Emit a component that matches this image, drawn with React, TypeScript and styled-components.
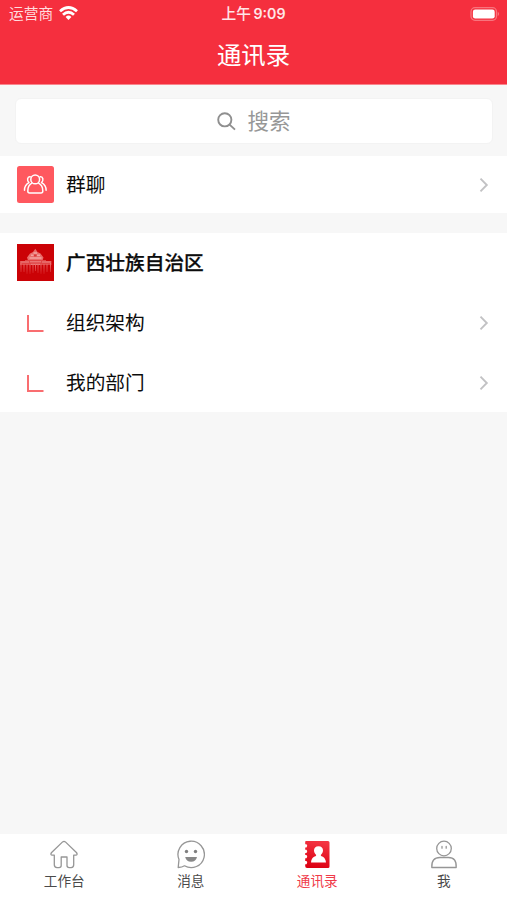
import React from "react";
import styled, { createGlobalStyle } from "styled-components";

const GlobalStyle = createGlobalStyle`
  * { box-sizing: border-box; }
  body {
    margin: 0;
    background: #f7f7f7;
    font-family: "Liberation Sans", "Noto Sans CJK SC", sans-serif;
  }
  svg { display: block; flex: none; }
`;

const Screen = styled.div`
  height: 900px;
  display: flex;
  flex-direction: column;
  overflow: hidden;
  background: #f7f7f7;
`;

const Header = styled.header`
  height: 85px;
  flex: none;
  background: #f52f3e;
  border-bottom: 1px solid #f9858d;
  color: #fff;
`;

const StatusBar = styled.div`
  height: 27px;
  padding: 0 7px 0 9px;
  display: grid;
  grid-template-columns: 1fr auto 1fr;
  align-items: center;
`;

const Carrier = styled.div`
  display: flex;
  align-items: center;
  gap: 6px;
  font-size: 14.7px;
  line-height: 20px;
  color: #ffdcde;
`;

const Clock = styled.div`
  font-family: Inter, "Noto Sans CJK SC", sans-serif;
  font-size: 14.2px;
  line-height: 20px;
  font-weight: 600;
  color: #ffe6e8;
  white-space: pre;
  margin-right: 2px;
`;

const Meridiem = styled.span`
  font-weight: 500;
  font-size: 14.7px;
  margin-right: -1px;
`;

const BatterySlot = styled.div`
  display: flex;
  justify-content: flex-end;
`;

const Title = styled.h1`
  margin: 0;
  height: 57px;
  line-height: 58px;
  text-align: center;
  font-size: 24.4px;
  font-weight: 400;
`;

const SearchBox = styled.div`
  flex: none;
  height: 46px;
  margin: 13px 14px 12px 15px;
  border-radius: 6px;
  border: 1px solid #f3f3f3;
  background: #fff;
  display: flex;
  align-items: center;
  justify-content: center;
  gap: 11px;
  font-size: 21.5px;
  line-height: 30px;
  color: #979797;
`;

const SearchText = styled.span`
  padding-top: 2px;
`;

const Group = styled.section<{ $gap?: number }>`
  flex: none;
  background: #fff;
  margin-bottom: ${(p) => p.$gap ?? 0}px;
`;

const Row = styled.div<{ $height: number; $bold?: boolean }>`
  height: ${(p) => p.$height}px;
  padding: 0 18px 0 17px;
  display: flex;
  align-items: center;
  font-size: 19.7px;
  line-height: 28px;
  font-weight: ${(p) => (p.$bold ? 500 : 400)};
  -webkit-text-stroke: ${(p) => (p.$bold ? "0.25px #0c0c0c" : "0")};
  color: #0c0c0c;
`;

const IconSlot = styled.div`
  width: 37px;
  margin-right: 12px;
  display: flex;
  justify-content: center;
`;

const Label = styled.span`
  flex: 1;
`;

const TabBar = styled.nav`
  flex: none;
  height: 66px;
  margin-top: auto;
  padding-left: 1px;
  background: #fff;
  display: grid;
  grid-template-columns: repeat(4, 1fr);
`;

const Tab = styled.div<{ $active?: boolean }>`
  display: flex;
  flex-direction: column;
  align-items: center;
  padding-top: 6px;
  gap: 3px;
  font-size: 13.6px;
  line-height: 20px;
  color: ${(p) => (p.$active ? "#f03a49" : "#4a4a4a")};
`;

const WifiIcon = () => (
  <svg width="19" height="15" viewBox="0 0 19 15" fill="none" stroke="#fff" strokeWidth="2.800">
    <path d="M1 5.3Q9.500-2.200 18 5.300" />
    <path d="M4 8.800Q9.500 3.700 15 8.800" />
    <path d="M6.600 11Q9.500 8.200 12.400 11L9.500 14Z" fill="#fff" stroke="none" />
  </svg>
);

const BatteryIcon = () => (
  <svg width="30" height="14" viewBox="0 0 30 14">
    <rect x="1" y=".7" width="25.500" height="12.600" rx="4" fill="none" stroke="#f8747d" strokeWidth="1.300" />
    <rect x="2.900" y="2.500" width="21.800" height="9" rx="2.300" fill="#fff" />
    <path d="M27.800 4.800Q30 7 27.800 9.200Z" fill="#f9858d" />
  </svg>
);

const SearchIcon = () => (
  <svg width="19" height="19" viewBox="0 0 19 19" fill="none" stroke="#8f8f8f" strokeWidth="1.900">
    <circle cx="7.800" cy="7.800" r="6.600" />
    <path d="M12.600 12.600L18 17.600" />
  </svg>
);

const ChevronIcon = () => (
  <svg width="10" height="14" viewBox="0 0 10 14" fill="none" stroke="#c2c2c4" strokeWidth="1.900">
    <path d="M1.500 .7L7.800 7L1.500 13.300" />
  </svg>
);

const GroupIcon = () => (
  <svg width="37" height="37" viewBox="0 0 37 37" fill="none" stroke="#fff" strokeWidth="1.500" strokeLinecap="round" strokeLinejoin="round">
    <rect width="37" height="37" rx="2.500" fill="#ff585f" stroke="none" />
    <circle cx="18.200" cy="13.400" r="4.400" />
    <path d="M14.800 17.200Q10.800 19.500 10.800 25Q10.800 27 12.600 27H24Q25.800 27 25.800 25Q25.800 19.500 21.600 17.200" />
    <path d="M13.200 10.800C10.300 10.300 9.700 14.600 12 16.600C9 18.300 7.400 21 7.500 24.200M23.200 10.800C26.100 10.300 26.900 14.600 24.500 16.600C27.500 18.300 29.200 21 29.100 24.200" />
  </svg>
);

const HallIcon = () => (
  <svg width="37" height="37" viewBox="0 0 37 37">
    <defs>
      <linearGradient id="hall-columns" x1="0" y1="0" x2="0" y2="1">
        <stop offset="0" stopColor="#ee7674" />
        <stop offset="1" stopColor="#d31216" />
      </linearGradient>
    </defs>
    <rect width="37" height="37" fill="#cb0206" />
    <path d="M18.300 4.800L20.500 8L23.500 9.500L26.500 13.500L25.500 16.500H11L10 13.500L13 9.500L16 8Z" fill="#e86c6a" />
    <path d="M16.500 9H20M14 11.200H16.500M20 11.200H23M12.500 14H24.500" stroke="#f8bdb9" strokeWidth="1" />
    <path d="M17 10.500H19.500V12.500H17Z" fill="#d93636" />
    <path d="M3 17H8V16H29V17H34.500V21H3Z" fill="#df4545" />
    <path d="M3.500 18H12M25 18H34M13 17.800H24M14 20.300H23" stroke="#f09b98" strokeWidth=".8" />
    <path d="M3.500 19h1v9h-1zM6.500 20h1v8h-1zM9.500 20h1v10h-1zM12.500 20h1v10h-1zM15.500 20h1v9h-1zM18 20h1v7h-1zM20.500 20h1v9h-1zM23.500 20h1v10h-1zM26.500 20h1v10h-1zM29.500 20h1v8h-1zM33 19h1v9h-1z" fill="url(#hall-columns)" />
  </svg>
);

const BranchIcon = () => (
  <svg width="19" height="20" viewBox="0 0 19 20" fill="none" stroke="#f96d70" strokeWidth="2">
    <path d="M2 2V18H17.500" />
  </svg>
);

const HomeIcon = () => (
  <svg width="28" height="29" viewBox="0 0 28 29" fill="none" stroke="#969696" strokeWidth="1.300" strokeLinejoin="round">
    <path d="M12.600 1.900Q14 .8 15.400 1.900L26.400 12.500Q28 14.700 26 15.200H23.700V24.800Q23.700 27.600 21.200 27.600H19.200Q17 27.600 17 25.500V17H11.200V25.500Q11.200 27.600 9 27.600H7Q4.300 27.600 4.300 24.800V15.200H2Q0 14.700 1.600 12.500Z" />
  </svg>
);

const MessageIcon = () => (
  <svg width="28" height="29" viewBox="0 0 28 29" fill="none" stroke="#969696" strokeWidth="1.300" strokeLinejoin="round">
    <path d="M1.200 27.500L2 19.500A13.200 13.200 0 1 1 7.500 25.800Q5 27.500 1.200 27.500Z" />
    <circle cx="9.500" cy="11.500" r="1.700" fill="#808080" stroke="none" />
    <circle cx="18.500" cy="11.500" r="1.700" fill="#808080" stroke="none" />
    <path d="M8.200 17H20Q19 21.700 14.100 21.700Q9.200 21.700 8.200 17Z" fill="#888" stroke="none" />
  </svg>
);

const ContactsIcon = () => (
  <svg width="28" height="29" viewBox="0 0 28 29">
    <defs>
      <linearGradient id="contacts-cover" x1=".6" y1="0" x2=".4" y2="1">
        <stop offset="0" stopColor="#f43543" />
        <stop offset="1" stopColor="#dc0012" />
      </linearGradient>
    </defs>
    <path d="M3 1H25Q26.500 1 26.500 2.500V26.500Q26.500 28 25 28H4Q2.200 28 2.200 26V24.300H3.500Q5 22.500 3.500 21H2.200V18.300H3.500Q5 16.500 3.500 15H2.200V13H3.500Q5 11.200 3.500 9.700H2.200V7.500H3.500Q5 5.800 3.500 4.300H2.200V2Q2.200 1 3 1Z" fill="url(#contacts-cover)" />
    <path d="M15.500 6.200C12.500 6.200 11 8 11 10.600C11 12.500 12 13.800 13.200 15C13.200 17 8.300 16.200 8 22.400H23C22.700 16.200 17.800 17 17.800 15C19 13.800 20 12.500 20 10.600C20 8 18.500 6.200 15.500 6.200Z" fill="#fff" />
  </svg>
);

const ProfileIcon = () => (
  <svg width="28" height="29" viewBox="0 0 28 29" fill="none" stroke="#969696" strokeWidth="1.300" strokeLinejoin="round">
    <circle cx="14" cy="8.500" r="7.300" />
    <path d="M1.800 27.500Q1.200 17.500 10 17.500H18.500Q26.800 17.500 26.200 27.500Z" />
    <path d="M12 6.500V8.200M16.200 6.500V8.200" strokeLinecap="round" />
  </svg>
);

const departments = [
  { name: "组织架构", height: 61 },
  { name: "我的部门", height: 59 },
];

const tabs = [
  { label: "工作台", Icon: HomeIcon },
  { label: "消息", Icon: MessageIcon },
  { label: "通讯录", Icon: ContactsIcon, active: true },
  { label: "我", Icon: ProfileIcon },
];

export default function App() {
  return (
    <Screen>
      <GlobalStyle />
      <Header>
        <StatusBar>
          <Carrier>运营商<WifiIcon /></Carrier>
          <Clock><Meridiem>上午</Meridiem> 9:09</Clock>
          <BatterySlot><BatteryIcon /></BatterySlot>
        </StatusBar>
        <Title>通讯录</Title>
      </Header>
      <SearchBox><SearchIcon /><SearchText>搜索</SearchText></SearchBox>
      <Group $gap={20}>
        <Row $height={57}>
          <IconSlot><GroupIcon /></IconSlot>
          <Label>群聊</Label>
          <ChevronIcon />
        </Row>
      </Group>
      <Group>
        <Row $height={59} $bold>
          <IconSlot><HallIcon /></IconSlot>
          <Label>广西壮族自治区</Label>
        </Row>
        {departments.map(({ name, height }) => (
          <Row key={name} $height={height}>
            <IconSlot><BranchIcon /></IconSlot>
            <Label>{name}</Label>
            <ChevronIcon />
          </Row>
        ))}
      </Group>
      <TabBar>
        {tabs.map(({ label, Icon, active }) => (
          <Tab key={label} $active={active}>
            <Icon />
            {label}
          </Tab>
        ))}
      </TabBar>
    </Screen>
  );
}
